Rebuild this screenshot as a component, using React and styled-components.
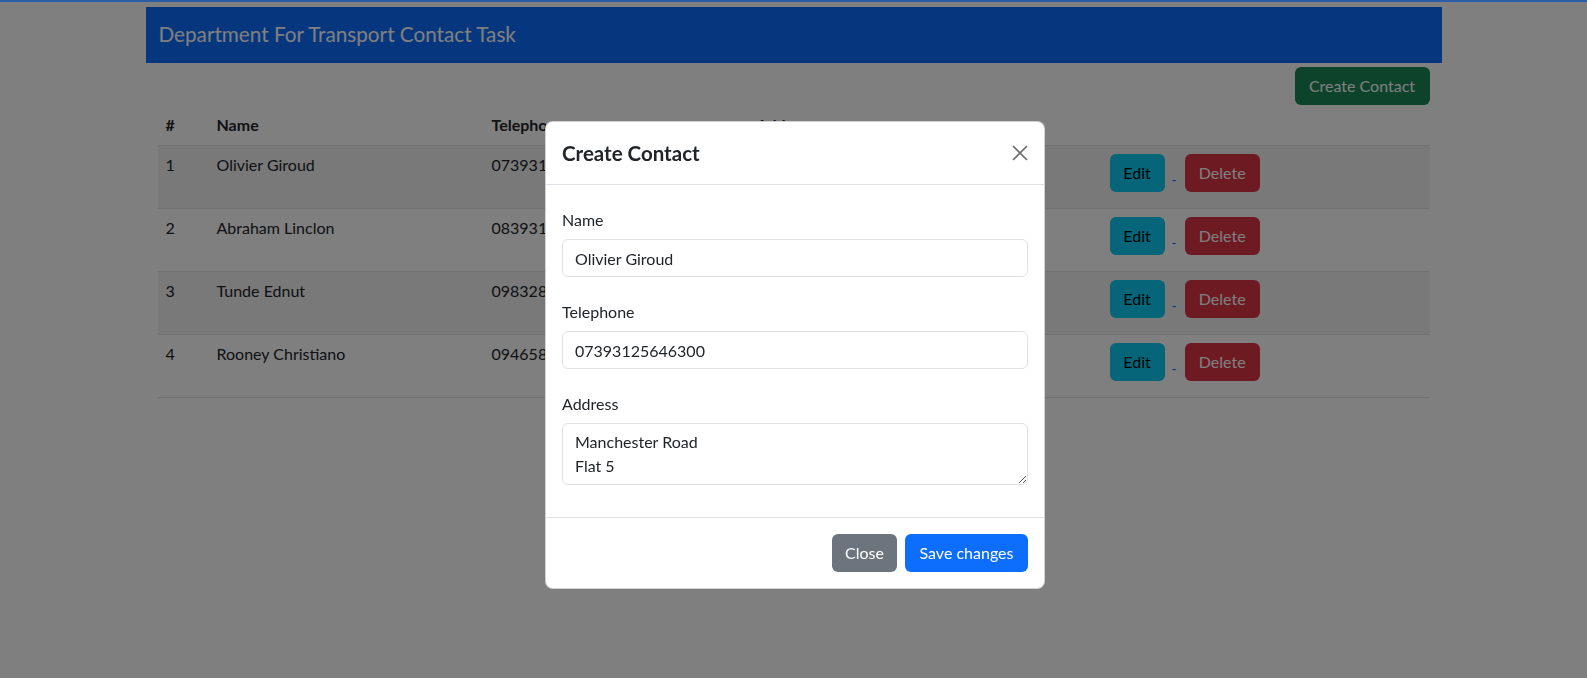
import React from "react";
import styled, { createGlobalStyle } from "styled-components";

const GlobalStyle = createGlobalStyle`
  body {
    margin: 0;
    background: #fff;
    color: #212529;
    font-family: Lato, "Noto Sans", sans-serif;
    font-size: 16px;
    line-height: 1.5;
  }
  * { box-sizing: border-box; }
`;

const contacts = [
  { id: 1, name: "Olivier Giroud", telephone: "07393125646300", address: "Manchester Road Flat 5" },
  { id: 2, name: "Abraham Linclon", telephone: "08393125646300", address: "Liverpool Street 12" },
  { id: 3, name: "Tunde Ednut", telephone: "09832856463001", address: "Oxford Road Flat 2" },
  { id: 4, name: "Rooney Christiano", telephone: "09465812564630", address: "Baker Street 221" },
];

// thin bar at the very top of the window
const TopLine = styled.div`
  position: relative;
  z-index: 1070;
  height: 2px;
  background: #2b5ca6;
`;

const Container = styled.div`
  max-width: 1320px;
  margin: 0 auto;
  padding: 5px 12px 0;
`;

const Header = styled.div`
  height: 56px;
  display: flex;
  align-items: center;
  padding-left: 13px;
  background: #0d6efd;
  color: #fff;
  font-size: 20.7px;
`;

const Content = styled.div`
  padding: 4px 12px 0;
`;

const Toolbar = styled.div`
  display: flex;
  justify-content: flex-end;
`;

const Button = styled.button`
  height: 38px;
  padding: 0 12px;
  border: 1px solid transparent;
  border-radius: 6px;
  font-family: inherit;
  font-size: 16px;
  line-height: 1.5;
  cursor: pointer;
  background: ${(p) => p.$bg};
  color: ${(p) => p.$color || "#fff"};
  width: ${(p) => (p.$w ? `${p.$w}px` : "auto")};
`;

const Table = styled.table`
  width: 100%;
  border-collapse: collapse;
  table-layout: fixed;
`;

const Th = styled.th`
  text-align: left;
  font-weight: 700;
  padding: 8px;
  height: 40px;
  border-bottom: 1px solid #dee2e6;
  vertical-align: top;
`;

const Tr = styled.tr`
  background: ${(p) => (p.$striped ? "rgba(0,0,0,0.05)" : "transparent")};
`;

const Td = styled.td`
  padding: 7px 8px 8px;
  height: 63px;
  vertical-align: top;
  border-bottom: 1px solid #dee2e6;
  white-space: nowrap;
  overflow: hidden;
`;

const Actions = styled.div`
  display: flex;
  align-items: flex-start;
  padding-top: 1px;
`;

const Dash = styled.span`
  color: #0d6efd;
  font-size: 14px;
  line-height: 14px;
  margin: 19px 8px 0 7px;
`;

const Backdrop = styled.div`
  position: fixed;
  inset: 0;
  background: rgba(0, 0, 0, 0.5);
  z-index: 1050;
`;

const Dialog = styled.div`
  position: fixed;
  top: 121px;
  left: 545px;
  width: 500px;
  z-index: 1060;
  background: #fff;
  border: 1px solid rgba(0, 0, 0, 0.175);
  border-radius: 8px;
  display: flex;
  flex-direction: column;
`;

const ModalHeader = styled.div`
  display: flex;
  align-items: center;
  justify-content: space-between;
  height: 63px;
  padding: 0 16px;
  border-bottom: 1px solid #dee2e6;
`;

const Title = styled.h5`
  margin: 0;
  font-size: 20.5px;
  font-weight: 700;
  line-height: 1.5;
  color: #212529;
`;

const CloseX = styled.button`
  width: 32px;
  height: 32px;
  margin-right: -8px;
  display: flex;
  align-items: center;
  justify-content: center;
  border: 0;
  background: transparent;
  padding: 0;
  cursor: pointer;
`;

const ModalBody = styled.div`
  padding: 16px;
  display: flex;
  flex-direction: column;
  gap: 16px;
`;

const Field = styled.div`
  display: flex;
  flex-direction: column;
  padding-top: 7px;
  gap: 7px;
`;

const Label = styled.label`
  display: block;
  line-height: 24px;
  color: #212529;
`;

const Input = styled.input`
  display: block;
  width: 100%;
  height: 38px;
  padding: 6px 12px;
  border: 1px solid #dee2e6;
  border-radius: 6px;
  font-family: inherit;
  font-size: 16px;
  line-height: 1.5;
  color: #212529;
  background: #fff;
`;

const TextArea = styled.textarea`
  display: block;
  width: 100%;
  height: 62px;
  padding: 6px 12px;
  border: 1px solid #dee2e6;
  border-radius: 6px;
  font-family: inherit;
  font-size: 16px;
  line-height: 1.5;
  color: #212529;
  resize: vertical;
  margin-bottom: 16px;
`;

const ModalFooter = styled.div`
  display: flex;
  justify-content: flex-end;
  gap: 8px;
  padding: 16px;
  border-top: 1px solid #dee2e6;
`;

const App = () => {
  return (
    <>
      <GlobalStyle />
      <TopLine />
      <Container>
        <Header>Department For Transport Contact Task</Header>
        <Content>
          <Toolbar>
            <Button $bg="#198754" $w={135}>Create Contact</Button>
          </Toolbar>
          <Table>
            <colgroup>
              <col style={{ width: 51 }} />
              <col style={{ width: 275 }} />
              <col style={{ width: 265 }} />
              <col style={{ width: 353 }} />
              <col />
            </colgroup>
            <thead>
              <tr>
                <Th>#</Th>
                <Th>Name</Th>
                <Th>Telephone</Th>
                <Th>Address</Th>
                <Th></Th>
              </tr>
            </thead>
            <tbody>
              {contacts.map((c, i) => (
                <Tr key={c.id} $striped={i % 2 === 0}>
                  <Td>{c.id}</Td>
                  <Td>{c.name}</Td>
                  <Td>{c.telephone}</Td>
                  <Td>{c.address}</Td>
                  <Td>
                    <Actions>
                      <Button $bg="#0dcaf0" $color="#000" $w={55}>Edit</Button>
                      <Dash>-</Dash>
                      <Button $bg="#dc3545" $w={75}>Delete</Button>
                    </Actions>
                  </Td>
                </Tr>
              ))}
            </tbody>
          </Table>
        </Content>
      </Container>

      <Backdrop />
      <Dialog>
        <ModalHeader>
          <Title>Create Contact</Title>
          <CloseX aria-label="Close">
            <svg width="16" height="16" viewBox="0 0 16 16">
              <path d="M1 1L15 15M15 1L1 15" stroke="#6c6c6c" strokeWidth="1.6" fill="none" />
            </svg>
          </CloseX>
        </ModalHeader>
        <ModalBody>
          <Field>
            <Label>Name</Label>
            <Input defaultValue="Olivier Giroud" />
          </Field>
          <Field>
            <Label>Telephone</Label>
            <Input defaultValue="07393125646300" />
          </Field>
          <Field>
            <Label>Address</Label>
            <TextArea rows={2} defaultValue={"Manchester Road\nFlat 5"} />
          </Field>
        </ModalBody>
        <ModalFooter>
          <Button $bg="#6c757d" $w={65}>Close</Button>
          <Button $bg="#0d6efd" $w={123}>Save changes</Button>
        </ModalFooter>
      </Dialog>
    </>
  );
};

export default App;
